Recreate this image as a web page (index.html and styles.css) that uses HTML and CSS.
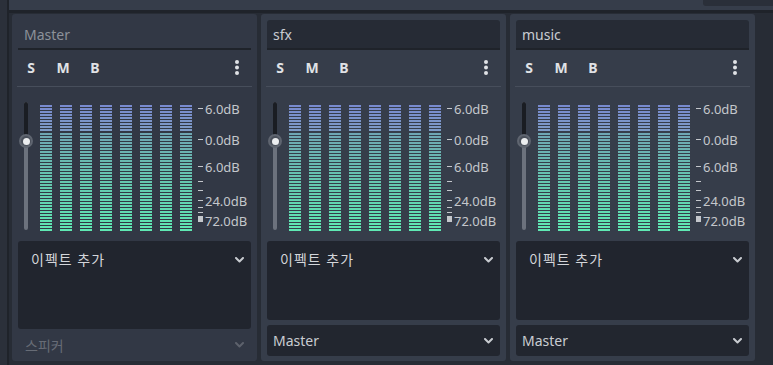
FILE: index.html
```html
<!DOCTYPE html>
<html lang="ko">
<head>
<meta charset="utf-8">
<title>Audio Buses</title>
<link rel="stylesheet" href="styles.css">
</head>
<body>
<div class="app">
  <div class="side"></div>
  <div class="side-line"></div>
  <div class="content">
    <div class="topbar"><div class="topbtn"></div></div>
    <div class="buses">

      <div class="bus bus-master">
        <div class="bus-name">Master</div>
        <div class="bus-tools">
          <span class="tool">S</span><span class="tool">M</span><span class="tool">B</span>
          <svg class="kebab" width="4" height="16" viewBox="0 0 4 16"><circle cx="2" cy="2" r="2"/><circle cx="2" cy="7.5" r="2"/><circle cx="2" cy="13" r="2"/></svg>
        </div>
        <div class="bus-sep"></div>
        <div class="meter">
          <div class="fader"><div class="fader-top"></div><div class="fader-grab"><div class="fader-dot"></div></div></div>
          <div class="channels">
            <div class="chan"><div class="chan-hi"></div><div class="chan-lo"></div></div>
            <div class="chan"><div class="chan-hi"></div><div class="chan-lo"></div></div>
            <div class="chan"><div class="chan-hi"></div><div class="chan-lo"></div></div>
            <div class="chan"><div class="chan-hi"></div><div class="chan-lo"></div></div>
            <div class="chan"><div class="chan-hi"></div><div class="chan-lo"></div></div>
            <div class="chan"><div class="chan-hi"></div><div class="chan-lo"></div></div>
            <div class="chan"><div class="chan-hi"></div><div class="chan-lo"></div></div>
            <div class="chan"><div class="chan-hi"></div><div class="chan-lo"></div></div>
          </div>
          <div class="scale">
            <span class="tick" style="top:21px"></span><span class="lbl" style="top:14px">6.0dB</span>
            <span class="tick" style="top:52px"></span><span class="lbl" style="top:45px">0.0dB</span>
            <span class="tick" style="top:79px"></span><span class="lbl" style="top:72px">6.0dB</span>
            <span class="tick" style="top:94px"></span>
            <span class="tick" style="top:103px"></span>
            <span class="tick" style="top:113px"></span><span class="lbl" style="top:106px">24.0dB</span>
            <span class="tick" style="top:120px"></span>
            <span class="tick" style="top:125px"></span>
            <span class="tick tick-block" style="top:129px"></span><span class="lbl" style="top:126px">72.0dB</span>
          </div>
        </div>
        <div class="fx fx-tall"><span>이펙트 추가</span><svg class="chev" width="9" height="6" viewBox="0 0 9 6"><path d="M1 1 L4.5 4.5 L8 1"/></svg></div>
        <div class="spk"><span>스피커</span><svg class="chev chev-dim" width="9" height="6" viewBox="0 0 9 6"><path d="M1 1 L4.5 4.5 L8 1"/></svg></div>
      </div>

      <div class="bus">
        <div class="bus-name bus-name-edit">sfx</div>
        <div class="bus-tools">
          <span class="tool">S</span><span class="tool">M</span><span class="tool">B</span>
          <svg class="kebab" width="4" height="16" viewBox="0 0 4 16"><circle cx="2" cy="2" r="2"/><circle cx="2" cy="7.5" r="2"/><circle cx="2" cy="13" r="2"/></svg>
        </div>
        <div class="bus-sep"></div>
        <div class="meter">
          <div class="fader"><div class="fader-top"></div><div class="fader-grab"><div class="fader-dot"></div></div></div>
          <div class="channels">
            <div class="chan"><div class="chan-hi"></div><div class="chan-lo"></div></div>
            <div class="chan"><div class="chan-hi"></div><div class="chan-lo"></div></div>
            <div class="chan"><div class="chan-hi"></div><div class="chan-lo"></div></div>
            <div class="chan"><div class="chan-hi"></div><div class="chan-lo"></div></div>
            <div class="chan"><div class="chan-hi"></div><div class="chan-lo"></div></div>
            <div class="chan"><div class="chan-hi"></div><div class="chan-lo"></div></div>
            <div class="chan"><div class="chan-hi"></div><div class="chan-lo"></div></div>
            <div class="chan"><div class="chan-hi"></div><div class="chan-lo"></div></div>
          </div>
          <div class="scale">
            <span class="tick" style="top:21px"></span><span class="lbl" style="top:14px">6.0dB</span>
            <span class="tick" style="top:52px"></span><span class="lbl" style="top:45px">0.0dB</span>
            <span class="tick" style="top:79px"></span><span class="lbl" style="top:72px">6.0dB</span>
            <span class="tick" style="top:94px"></span>
            <span class="tick" style="top:103px"></span>
            <span class="tick" style="top:113px"></span><span class="lbl" style="top:106px">24.0dB</span>
            <span class="tick" style="top:120px"></span>
            <span class="tick" style="top:125px"></span>
            <span class="tick tick-block" style="top:129px"></span><span class="lbl" style="top:126px">72.0dB</span>
          </div>
        </div>
        <div class="fx"><span>이펙트 추가</span><svg class="chev" width="9" height="6" viewBox="0 0 9 6"><path d="M1 1 L4.5 4.5 L8 1"/></svg></div>
        <div class="out"><span>Master</span><svg class="chev" width="9" height="6" viewBox="0 0 9 6"><path d="M1 1 L4.5 4.5 L8 1"/></svg></div>
      </div>

      <div class="bus">
        <div class="bus-name bus-name-edit">music</div>
        <div class="bus-tools">
          <span class="tool">S</span><span class="tool">M</span><span class="tool">B</span>
          <svg class="kebab" width="4" height="16" viewBox="0 0 4 16"><circle cx="2" cy="2" r="2"/><circle cx="2" cy="7.5" r="2"/><circle cx="2" cy="13" r="2"/></svg>
        </div>
        <div class="bus-sep"></div>
        <div class="meter">
          <div class="fader"><div class="fader-top"></div><div class="fader-grab"><div class="fader-dot"></div></div></div>
          <div class="channels">
            <div class="chan"><div class="chan-hi"></div><div class="chan-lo"></div></div>
            <div class="chan"><div class="chan-hi"></div><div class="chan-lo"></div></div>
            <div class="chan"><div class="chan-hi"></div><div class="chan-lo"></div></div>
            <div class="chan"><div class="chan-hi"></div><div class="chan-lo"></div></div>
            <div class="chan"><div class="chan-hi"></div><div class="chan-lo"></div></div>
            <div class="chan"><div class="chan-hi"></div><div class="chan-lo"></div></div>
            <div class="chan"><div class="chan-hi"></div><div class="chan-lo"></div></div>
            <div class="chan"><div class="chan-hi"></div><div class="chan-lo"></div></div>
          </div>
          <div class="scale">
            <span class="tick" style="top:21px"></span><span class="lbl" style="top:14px">6.0dB</span>
            <span class="tick" style="top:52px"></span><span class="lbl" style="top:45px">0.0dB</span>
            <span class="tick" style="top:79px"></span><span class="lbl" style="top:72px">6.0dB</span>
            <span class="tick" style="top:94px"></span>
            <span class="tick" style="top:103px"></span>
            <span class="tick" style="top:113px"></span><span class="lbl" style="top:106px">24.0dB</span>
            <span class="tick" style="top:120px"></span>
            <span class="tick" style="top:125px"></span>
            <span class="tick tick-block" style="top:129px"></span><span class="lbl" style="top:126px">72.0dB</span>
          </div>
        </div>
        <div class="fx"><span>이펙트 추가</span><svg class="chev" width="9" height="6" viewBox="0 0 9 6"><path d="M1 1 L4.5 4.5 L8 1"/></svg></div>
        <div class="out"><span>Master</span><svg class="chev" width="9" height="6" viewBox="0 0 9 6"><path d="M1 1 L4.5 4.5 L8 1"/></svg></div>
      </div>

    </div>
  </div>
</div>
</body>
</html>
```

FILE: styles.css
```css
* { box-sizing: border-box; }
html, body {
  margin: 0;
  padding: 0;
  width: 773px;
  height: 365px;
  overflow: hidden;
  background: #21252d;
  font-family: "Noto Sans", "Noto Sans CJK KR", sans-serif;
}
.app {
  display: flex;
  height: 365px;
}
.side {
  width: 7px;
  background: #2b303a;
}
.side-line {
  width: 2px;
  background: #1f232a;
}
.content {
  flex: 1;
  display: flex;
  flex-direction: column;
}
.topbar {
  height: 10px;
  background: #363d4a;
  display: flex;
  justify-content: flex-end;
}
.topbtn {
  width: 70px;
  height: 6px;
  background: #2a2f39;
  border-bottom-left-radius: 3px;
}
.buses {
  flex: 1;
  display: flex;
  gap: 4px;
  padding: 1px 0 0 3px;
  border-top: 3px solid #1f232a;
  background: #272c35;
}
.bus {
  width: 245px;
  height: 347px;
  background: #363d4a;
  border-radius: 3px;
  padding: 6px 6px 5px;
  display: flex;
  flex-direction: column;
}
.bus > * {
  flex-shrink: 0;
}
.bus-master {
  background: #323845;
  padding-bottom: 0;
}
.bus-name {
  height: 30px;
  border-bottom: 2px solid #1f232a;
  padding-left: 6px;
  font-size: 14px;
  line-height: 30px;
  color: #8c9199;
  border-radius: 3px 3px 0 0;
}
.bus-name-edit {
  background: #262b35;
  color: #c9ccd1;
}
.bus-tools {
  height: 36px;
  display: flex;
  align-items: center;
  margin-left: -3px;
}
.tool {
  width: 32px;
  text-align: center;
  font-size: 14px;
  font-weight: 700;
  color: #e0e2e6;
  line-height: 16px;
}
.kebab {
  margin-left: auto;
  margin-right: 12px;
  fill: #e0e2e6;
}
.bus-sep {
  height: 1px;
  background: #474e5b;
  margin: 0 -1px;
}
.meter {
  height: 154px;
  display: flex;
  align-items: flex-start;
  padding-left: 6px;
}
.fader {
  position: relative;
  width: 4px;
  height: 128px;
  margin-top: 15px;
  background: #6c727d;
  border-radius: 2px;
}
.fader-top {
  height: 39px;
  background: #1a1d23;
  border-radius: 2px 2px 0 0;
}
.fader-grab {
  position: absolute;
  left: -5px;
  top: 32px;
  width: 14px;
  height: 14px;
  border-radius: 50%;
  background: #4a505b;
  border: 2px solid #5f6570;
  display: flex;
  align-items: center;
  justify-content: center;
}
.fader-dot {
  width: 7px;
  height: 7px;
  border-radius: 50%;
  background: #eceef0;
}
.channels {
  display: flex;
  gap: 8px;
  margin-left: 12px;
  margin-top: 18px;
}
.chan {
  width: 12px;
  display: flex;
  flex-direction: column;
}
.chan-hi,
.chan-lo {
  -webkit-mask-image: repeating-linear-gradient(to bottom, #000 0 2px, transparent 2px 3px);
  mask-image: repeating-linear-gradient(to bottom, #000 0 2px, transparent 2px 3px);
}
.chan-hi {
  height: 26px;
  background: linear-gradient(to bottom, #788ad0, #7e9cc6);
}
.chan-lo {
  height: 98px;
  margin-top: 2px;
  background: linear-gradient(to bottom, #6fa6b3, #66c4b0 45%, #5fe9b3);
}
.scale {
  position: relative;
  flex: 1;
  height: 154px;
  margin-left: 6px;
}
.tick {
  position: absolute;
  left: 0;
  width: 5px;
  height: 1px;
  background: #c4c7cc;
}
.tick-block {
  height: 6px;
}
.lbl {
  position: absolute;
  left: 7px;
  margin-top: 1px;
  font-size: 13px;
  line-height: 14px;
  color: #c4c7cc;
  white-space: nowrap;
}
.fx {
  height: 79px;
  background: #21252e;
  border-radius: 3px;
  display: flex;
  align-items: flex-start;
  justify-content: space-between;
  padding: 9px 7px 0 13px;
  font-size: 14px;
  line-height: 20px;
  letter-spacing: 1px;
  color: #d4d6da;
}
.fx-tall {
  height: 88px;
}
.fx .chev {
  margin-top: 7px;
}
.chev {
  fill: none;
  stroke: #c8cbd0;
  stroke-width: 2;
  stroke-linecap: round;
  stroke-linejoin: round;
}
.chev-dim {
  stroke: #5d626c;
}
.out {
  height: 31px;
  margin-top: 5px;
  background: #22262f;
  border-radius: 3px;
  display: flex;
  align-items: center;
  justify-content: space-between;
  padding: 0 7px 0 6px;
  font-size: 14px;
  color: #c9ccd1;
}
.spk {
  height: 32px;
  display: flex;
  align-items: center;
  justify-content: space-between;
  padding: 0 7px 0 7px;
  font-size: 14px;
  color: #676c76;
}
```
